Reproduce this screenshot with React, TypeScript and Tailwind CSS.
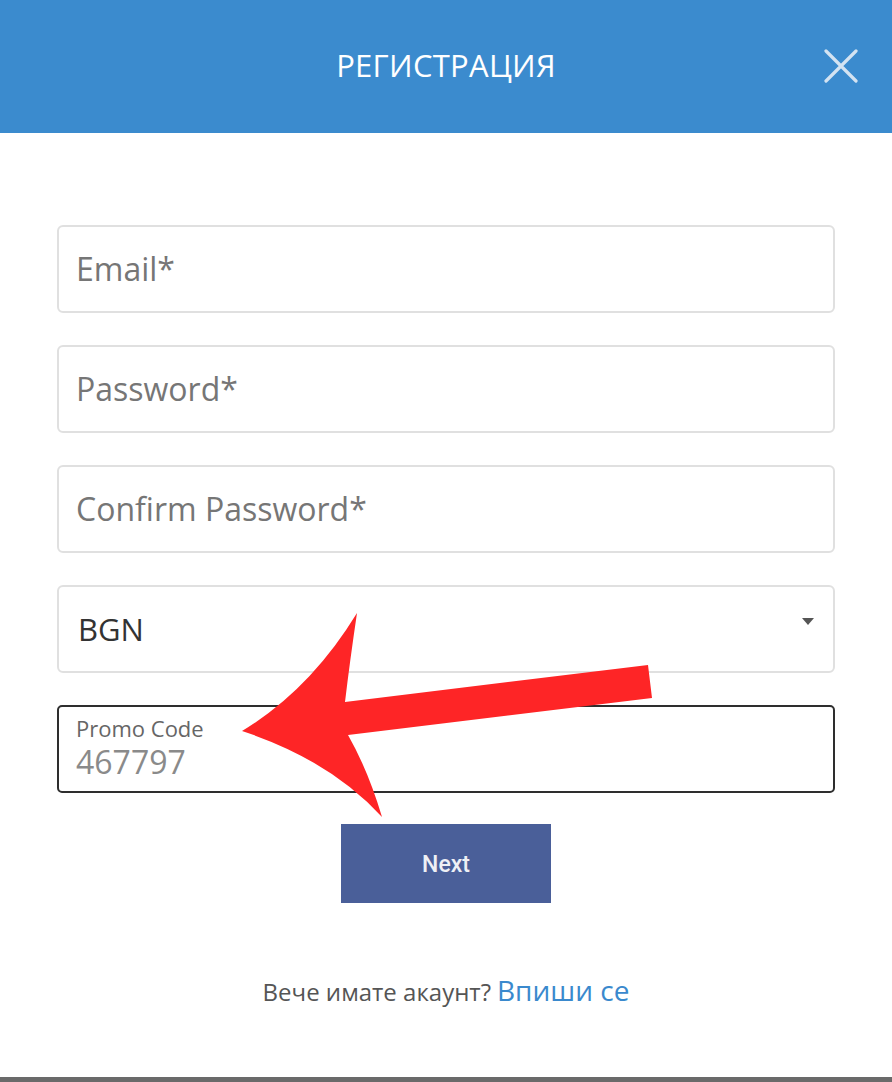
import React from "react";

const font = { fontFamily: '"Open Sans", "Noto Sans", sans-serif' };

function Field({ label }: { label: string }) {
  return (
    <div className="h-[88px] w-full rounded-[6px] border-2 border-[#e0e0e0] flex items-center pl-[17px]">
      <span className="text-[32px] text-[#767676] leading-none">{label}</span>
    </div>
  );
}

export default function App() {
  return (
    <div className="relative w-[892px] h-[1082px] bg-white overflow-hidden flex flex-col" style={font}>
      <div className="h-[133px] bg-[#3b8bce] flex items-center justify-center relative shrink-0">
        <span className="text-white text-[31px] tracking-[0.3px] mt-[-2px]">РЕГИСТРАЦИЯ</span>
        <svg className="absolute left-[823px] top-[49px]" width="36" height="34" viewBox="0 0 36 34">
          <path d="M3 2 L33 32 M33 2 L3 32" stroke="#d3e3f2" strokeWidth="3.2" strokeLinecap="round" />
        </svg>
      </div>

      <div className="flex-1 flex flex-col px-[57px] pt-[92px]">
        <div className="flex flex-col gap-[32px]">
          <Field label="Email*" />
          <Field label="Password*" />
          <Field label="Confirm Password*" />
          <div className="h-[88px] w-full rounded-[6px] border-2 border-[#e0e0e0] flex items-center pl-[19px] pr-[18px] justify-between">
            <span className="text-[31px] text-[#333] leading-none">BGN</span>
            <svg width="14" height="8" viewBox="0 0 14 8" className="mt-[-14px]">
              <path d="M1 0 L13 0 L7 7 Z" fill="#555" />
            </svg>
          </div>
          <div className="h-[88px] w-full rounded-[5px] border-2 border-[#2e2e2e] flex flex-col justify-center pl-[17px] gap-[3px]">
            <span className="text-[22px] text-[#666] leading-[26px] mt-[-4px]">Promo Code</span>
            <span className="text-[32px] text-[#8a8a8a] leading-[36px]">467797</span>
          </div>
        </div>

        <div className="flex justify-center mt-[31px]">
          <button
            className="w-[210px] h-[79px] bg-[#4a5f99] text-[#eef0f5] text-[23px] font-medium pt-[3px]"
            style={{ fontFamily: 'Roboto, "Open Sans", sans-serif' }}
          >
            Next
          </button>
        </div>

        <div className="flex justify-center items-baseline mt-[66px] gap-[6px]">
          <span className="text-[24px] text-[#555]">Вече имате акаунт?</span>
          <span className="text-[28px] text-[#3a89cd]">Впиши се</span>
        </div>
      </div>

      <div className="h-[5px] bg-[#6a6a6a] shrink-0" />

      <svg className="absolute left-0 top-0 pointer-events-none" width="892" height="1082" viewBox="0 0 892 1082">
        <path
          d="M242 731 Q310 690 357 613 Q350 660 345 702 L648 665 L652 698 L348 735 Q368 770 382 817 Q330 760 242 731 Z"
          fill="#fe2526"
        />
      </svg>
    </div>
  );
}
